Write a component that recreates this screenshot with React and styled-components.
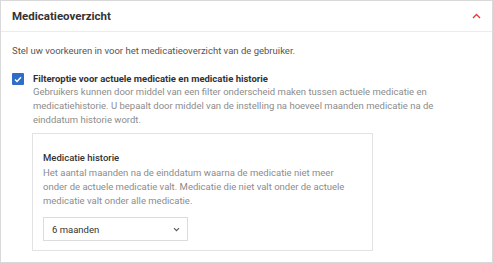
import React from "react";
import styled, { createGlobalStyle } from "styled-components";

const Global = createGlobalStyle`
  html, body { margin: 0; padding: 0; background: #fff; }
  body { font-family: Roboto, "Noto Sans", Arial, sans-serif; }
  * { box-sizing: border-box; }
`;

const Card = styled.section`
  width: 493px;
  height: 263px;
  border: 1px solid #d9d9d9;
  background: #fff;
  display: flex;
  flex-direction: column;
  overflow: hidden;
`;

const Header = styled.header`
  height: 31px;
  flex: none;
  display: flex;
  align-items: center;
  justify-content: space-between;
  padding: 0 11px 0 11px;
  border-bottom: 1px solid #ececec;
`;

const Title = styled.h2`
  margin: 0;
  font-size: 11.5px;
  font-weight: 700;
  color: #333;
`;

const Chevron = styled.svg`
  width: 9px;
  height: 6px;
  display: block;
`;

const Body = styled.div`
  padding: 12px 11px 0 11px;
  display: flex;
  flex-direction: column;
`;

const Intro = styled.p`
  margin: 0;
  font-size: 9.5px;
  line-height: 14px;
  color: #555;
`;

const OptionRow = styled.div`
  display: flex;
  gap: 9px;
  margin-top: 14px;
  align-items: flex-start;
`;

const CheckBox = styled.span`
  width: 12px;
  height: 12px;
  flex: none;
  border-radius: 1px;
  background: #2f6ec6;
  display: flex;
  align-items: center;
  justify-content: center;
  margin-top: 1px;
`;

const OptionContent = styled.div`
  display: flex;
  flex-direction: column;
`;

const Label = styled.div`
  font-size: 9.5px;
  line-height: 13px;
  font-weight: 700;
  color: #333;
`;

const Help = styled.p`
  margin: 0;
  font-size: 9.5px;
  line-height: 14px;
  color: ${(p) => (p.$muted ? "#8c8c8c" : "#555")};
  max-width: ${(p) => p.$max || "none"};
`;

const SubPanel = styled.div`
  margin-top: 6px;
  margin-left: -1px;
  width: 341px;
  border: 1px solid #e2e2e2;
  padding: 17px 10px 9px 10px;
  display: flex;
  flex-direction: column;
`;

const SubTitle = styled.div`
  font-size: 9.5px;
  line-height: 13px;
  font-weight: 500;
  color: #333;
  margin-bottom: 2px;
`;

const SelectBox = styled.div`
  margin-top: 9px;
  width: 145px;
  height: 24px;
  border: 1px solid #dcdcdc;
  display: flex;
  align-items: center;
  justify-content: space-between;
  padding: 0 7px 0 8px;
  font-size: 9.5px;
  color: #333;
`;

const Caret = styled.svg`
  width: 7px;
  height: 5px;
  display: block;
`;

export default function App() {
  return (
    <>
      <Global />
      <Card>
        <Header>
          <Title>Medicatieoverzicht</Title>
          <Chevron viewBox="0 0 9 6">
            <path d="M1 5 L4.5 1.5 L8 5" fill="none" stroke="#e53935" strokeWidth="1.4" />
          </Chevron>
        </Header>
        <Body>
          <Intro>Stel uw voorkeuren in voor het medicatieoverzicht van de gebruiker.</Intro>
          <OptionRow>
            <CheckBox>
              <svg width="8" height="7" viewBox="0 0 8 7">
                <path d="M1 3.6 L3 5.5 L7 1.2" fill="none" stroke="#fff" strokeWidth="1.4" />
              </svg>
            </CheckBox>
            <OptionContent>
              <Label>Filteroptie voor actuele medicatie en medicatie historie</Label>
              <Help $muted $max="415px">
                Gebruikers kunnen door middel van een filter onderscheid maken tussen actuele medicatie en
                medicatiehistorie. U bepaalt door middel van de instelling na hoeveel maanden medicatie na de
                einddatum historie wordt.
              </Help>
              <SubPanel>
                <SubTitle>Medicatie historie</SubTitle>
                <Help $muted $max="310px">
                  Het aantal maanden na de einddatum waarna de medicatie niet meer onder de actuele medicatie
                  valt. Medicatie die niet valt onder de actuele medicatie valt onder alle medicatie.
                </Help>
                <SelectBox>
                  <span>6 maanden</span>
                  <Caret viewBox="0 0 7 5">
                    <path d="M1 1.2 L3.5 3.7 L6 1.2" fill="none" stroke="#555" strokeWidth="1.1" />
                  </Caret>
                </SelectBox>
              </SubPanel>
            </OptionContent>
          </OptionRow>
        </Body>
      </Card>
    </>
  );
}
